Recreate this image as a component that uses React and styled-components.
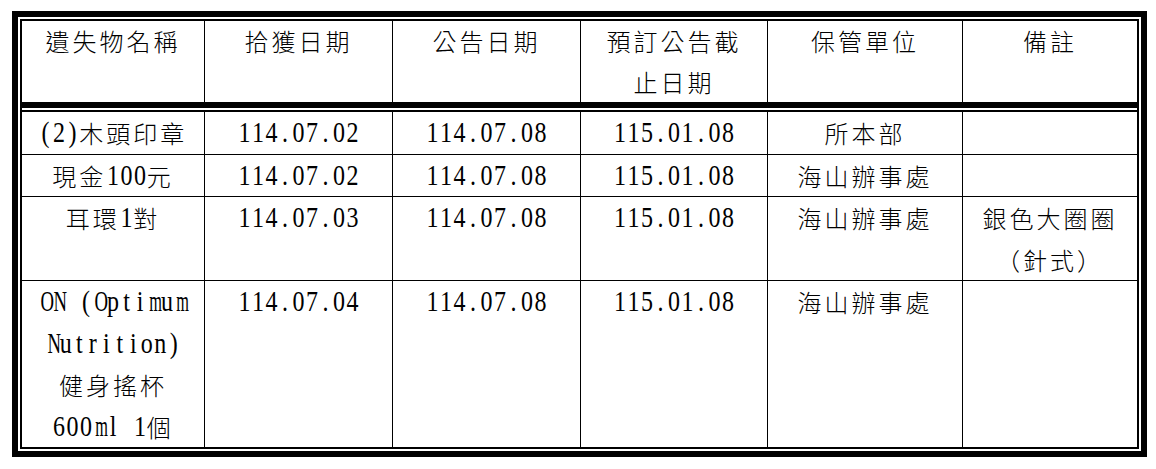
import React from "react"
import styled, {createGlobalStyle} from "styled-components"

const GlobalStyle = createGlobalStyle`
  * { box-sizing: border-box; }
  body {
    margin: 0;
    background: #fff;
    color: #000;
    font-family: "Noto Sans CJK TC", "Noto Sans CJK SC", sans-serif;
  }
`

const widths = [183, 188, 188, 187, 195, 174]

const head = ["遺失物名稱", "拾獲日期", "公告日期", ["預訂公告截", "止日期"], "保管單位", "備註"]

const rows = [
  ["(2)木頭印章", "114.07.02", "114.07.08", "115.01.08", "所本部", ""],
  ["現金100元", "114.07.02", "114.07.08", "115.01.08", "海山辦事處", ""],
  ["耳環1對", "114.07.03", "114.07.08", "115.01.08", "海山辦事處", ["銀色大圈圈", "（針式）"]],
  [["ON (Optimum", "Nutrition)", "健身搖杯", "600ml 1個"], "114.07.04", "114.07.08", "115.01.08", "海山辦事處", ""],
]

// how much a wide serif letter is squeezed to fit its half-width cell
const squeeze = ch => {
  if (/[mw]/.test(ch)) return 0.68
  if (/[A-Z]/.test(ch)) return 0.78
  return 1
}

// half-width latin chars sit in fixed cells, like the mono serif of the original
const Rich = ({text}) => {
  const lines = Array.isArray(text) ? text : [text]
  return lines.map((line, i) => (
    <React.Fragment key={i}>
      {i > 0 && <br />}
      {line.split(/([\x20-\x7e]+)/).map((part, j) =>
        j % 2
          ? [...part].map((ch, k) => (
              <Glyph key={j + "-" + k} $sx={squeeze(ch)}>
                {ch === " " ? "\u00a0" : ch}
              </Glyph>
            ))
          : part
      )}
    </React.Fragment>
  ))
}

export default function App() {
  return (
    <Page>
      <GlobalStyle />
      <Frame>
        <Table>
          <colgroup>
            {widths.map((w, i) => <Col key={i} $w={w} />)}
          </colgroup>
          <thead>
            <tr>
              {head.map((h, i) => <Th key={i}><Rich text={h} /></Th>)}
            </tr>
          </thead>
          <tbody>
            <tr><Gap colSpan={6} /></tr>
            {rows.map((r, i) => (
              <Row key={i}>
                {r.map((c, j) => <Td key={j}><Rich text={c} /></Td>)}
              </Row>
            ))}
          </tbody>
        </Table>
      </Frame>
    </Page>
  )
}

const Page = styled.div`
  padding: 11px 0 0 12px;
`

const Frame = styled.div`
  width: 1135px;
  border: 6px solid #000;
  padding: 2px;
`

const Table = styled.table`
  width: 1119px;
  table-layout: fixed;
  border-collapse: separate;
  border-spacing: 0;
  border: 2px solid #000;
`

const Col = styled.col`
  width: ${p => p.$w}px;
`

const Cell = styled.td`
  padding: 0;
  text-align: center;
  vertical-align: top;
  font-size: 24px;
  letter-spacing: 3px;
  font-weight: 300;
  white-space: nowrap;
  border-right: 1px solid #000;
  &:last-child { border-right: none; }
`

const Th = styled(Cell).attrs({as: "th"})`
  line-height: 40.5px;
  border-bottom: 6px solid #000;
`

const Td = styled(Cell)`
  line-height: 41.5px;
`

const Row = styled.tr`
  ${Td} { border-bottom: 1px solid #000; }
  &:nth-child(2) ${Td} { border-top: 2px solid #000; }
  &:last-child ${Td} { border-bottom: none; }
`

const Gap = styled.td`
  height: 2px;
  padding: 0;
  line-height: 0;
  font-size: 0;
`

const Glyph = styled.span`
  display: inline-block;
  vertical-align: top;
  width: 13.5px;
  text-align: center;
  font-family: "Liberation Serif", serif;
  font-size: 24px;
  font-weight: 400;
  letter-spacing: 0;
  transform: scale(${p => p.$sx}, 1.25);
`
